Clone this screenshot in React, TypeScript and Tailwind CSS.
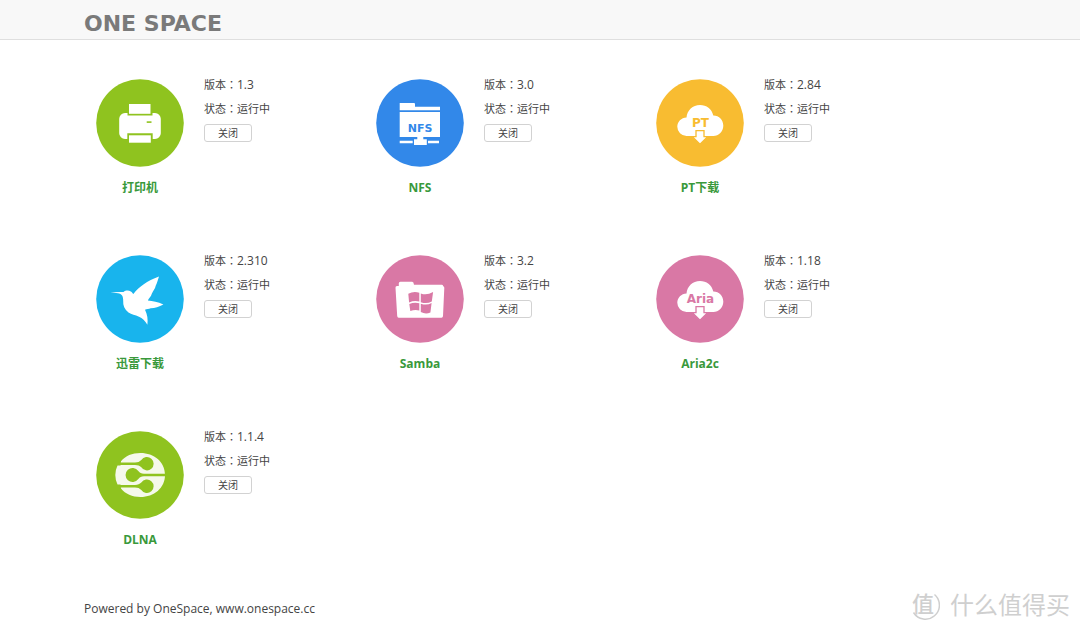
import type { ReactNode } from 'react'

type Service = {
  name: string
  version: string
  icon: ReactNode
}

const PrinterIcon = () => (
  <svg viewBox="0 0 88 88" className="size-[88px]" aria-hidden="true">
    <circle cx="44" cy="44" r="43.8" fill="#8fc31f" />
    <rect x="33" y="25" width="21.5" height="9.8" fill="#fff" />
    <path
      fill="#fff"
      d="M29 34h2.5v2.6h25V34H59a5.8 5.8 0 0 1 5.8 5.8v14.4A5.8 5.8 0 0 1 59 60h-2.3v-5.8H31.3V60H29a5.8 5.8 0 0 1-5.8-5.8V39.8A5.8 5.8 0 0 1 29 34z"
    />
    <rect x="33" y="56.3" width="21.8" height="7.4" fill="#fff" />
    <rect x="50.7" y="42.3" width="4.8" height="1.6" fill="#8fc31f" />
  </svg>
)

const NfsIcon = () => (
  <svg viewBox="0 0 88 88" className="size-[88px]" aria-hidden="true">
    <circle cx="44" cy="44" r="43.8" fill="#3288e9" />
    <path
      fill="#fff"
      d="M23.7 24H38q1 0 1 1v2.7h25v3.6H23.7zM23.7 33H64v25H47.3v2.3h3.5V66H38v-5.7h3.3V58H23.7zM23.7 61.7h13v2.6h-13zM52 61.7h11v2.6H52z"
    />
    <text x="44" y="53.4" textAnchor="middle" fontSize="11" fontWeight="700" fontFamily="DejaVu Sans, sans-serif" fill="#3288e9">
      NFS
    </text>
  </svg>
)

const CloudIcon = ({ color, text }: { color: string; text: string }) => (
  <svg viewBox="0 0 88 88" className="size-[88px]" aria-hidden="true">
    <circle cx="44" cy="44" r="43.8" fill={color} />
    <path
      fill="#fff"
      d="M30.5 57a9.2 9.2 0 0 1-9.2-9.2c0-5 4-9.1 9.2-9.3C31 31.4 36.7 26 44 26c6.4 0 11.8 4 13.3 10.5 6 0 10 4.6 10 10.3S62.8 57 57.3 57z"
    />
    <path
      fill="#fff"
      stroke={color}
      strokeWidth="1.3"
      d="M40 51.7h8v6h3.6L44 65.2l-7.6-7.5H40z"
    />
    <text x="44.5" y="47.5" textAnchor="middle" fontSize="12" fontWeight="700" fontFamily="DejaVu Sans, sans-serif" fill={color}>
      {text}
    </text>
  </svg>
)

const BirdIcon = () => (
  <svg viewBox="0 0 88 88" className="size-[88px]" aria-hidden="true">
    <circle cx="44" cy="44" r="43.8" fill="#18b4ed" />
    <path
      fill="#fff"
      d="M14.5 37.2q7-.4 13-.3c2-1.5 5-1.7 7.3-.5 1.3.7 1.7 1.8 2.6 2.6C43 32 51 26 63 21.6c-1.2 3.4-1.7 6-3.3 9.2-.6 3.2-2.6 5-4 8.3-.6 3-2.7 3.6-3.9 6.4 5 .5 10 1.5 15.6 3.9-4.4 2.5-8.4 3.3-12.7 3.9-2 .7-4 .6-5.7 1.5 2.5 5 3 9.5 2.4 15-2.4-3.8-5-6.6-8.4-8-3.8-2-7.5-2-10.500-4.300-4-3.300-5.600-7-5.300-11.500.2-4.800-1.400-7.300-5.200-7.800q-3.500-.7-7.500-1z"
    />
  </svg>
)

const SambaIcon = () => (
  <svg viewBox="0 0 88 88" className="size-[88px]" aria-hidden="true">
    <circle cx="44" cy="44" r="43.8" fill="#d978a5" />
    <path
      fill="#fff"
      d="M22.8 31v-2.7q0-1.6 1.6-1.6h11.8q1.5 0 1.8 3h28q1.2 0 1.2 1.6 1.2 0 1.1 1.6l-1.3 28.2q-.1 1.6-1.5 1.6H22.7q-1.4 0-1.5-1.6L19.5 32.8Q19.4 31 21 31z"
    />
    <g fill="#d978a5">
      <path d="M32.3 38.8q5.400-3 11-1v8.800q-5-1.400-10.200.9z" />
      <path d="M44.8 38.500q6 2.300 12.300-1.600l-1.300 9.600q-5 2.700-11 .7z" />
      <path d="M33.3 49q5-2.200 10-.8v7.200q-4.500-1.200-9 .6z" />
      <path d="M44.8 48.700q6 2 10.800-.7l-1.200 9.600q-5 2-9.600-.6z" />
    </g>
  </svg>
)

const DlnaIcon = () => (
  <svg viewBox="0 0 88 88" className="size-[88px]" aria-hidden="true">
    <circle cx="44" cy="44" r="43.8" fill="#8fc31f" />
    <path
      fill="#f5f9ea"
      d="M25 30.3C29.5 25 36 22.1 44.5 22.1 58 22.1 69 31 69 44s-11 22-24.5 22C36 66 29.5 63 25 57.5L24.5 53.5h-3Q19.3 49 19.3 44t2.2-9.5h3z"
    />
    <g fill="#8fc31f">
      <path d="M22 31.6h17c3 0 4.5-.8 6.3-2.5a6.7 6.7 0 1 1 0 7.2c-1.800-1.600-3.300-2.300-6.300-2.300H22z" />
      <path d="M70 42.7H48c-3 0-4-.9-5.7-2.7a7 7 0 1 0 0 8c1.700-1.800 2.700-2.700 5.700-2.700h22z" />
      <path d="M20 54h19c3 0 4.5-.7 6.3-2.4a6.7 6.7 0 1 1 0 7.3c-1.800-1.700-3.300-2.500-6.300-2.500H22z" />
    </g>
  </svg>
)

const services: Service[] = [
  { name: '打印机', version: '1.3', icon: <PrinterIcon /> },
  { name: 'NFS', version: '3.0', icon: <NfsIcon /> },
  { name: 'PT下载', version: '2.84', icon: <CloudIcon color="#f8bc31" text="PT" /> },
  { name: '迅雷下载', version: '2.310', icon: <BirdIcon /> },
  { name: 'Samba', version: '3.2', icon: <SambaIcon /> },
  { name: 'Aria2c', version: '1.18', icon: <CloudIcon color="#d978a5" text="Aria" /> },
  { name: 'DLNA', version: '1.1.4', icon: <DlnaIcon /> },
]

// the JP face centres the full-width colon
const Colon = () => <span className="font-['Noto_Sans_CJK_JP',sans-serif]">：</span>

const ServiceItem = ({ name, version, icon }: Service) => (
  <li className="flex gap-5 pl-3">
    <div className="flex w-[88px] flex-col items-center">
      {icon}
      <h2 className="mt-3 whitespace-nowrap text-xs leading-[18px] font-bold text-[#39993b]">{name}</h2>
    </div>
    <div className="-mt-[7px] flex flex-col items-start whitespace-nowrap text-[11px] leading-6">
      <p className="h-6">版本<Colon /><span className="text-xs leading-6">{version}</span></p>
      <p className="h-6">状态<Colon />运行中</p>
      <button
        type="button"
        className="mt-1 flex h-[18px] w-12 cursor-pointer items-center justify-center rounded-[3px] border border-[#d2d2d2] bg-white text-[10px] leading-4 hover:bg-gray-50"
      >
        关闭
      </button>
    </div>
  </li>
)

export default function App() {
  return (
    <div className="relative min-h-screen bg-white font-['Open_Sans','Noto_Sans_CJK_SC',sans-serif] text-[#444]">
      <header className="flex h-10 items-center border-b border-[#dfdfdf] bg-[#f8f8f8] pt-2 pl-[84px]">
        <h1 className="font-['DejaVu_Sans',sans-serif] text-[22px] leading-6 font-bold text-[#7a7a7a]">ONE SPACE</h1>
      </header>

      <main className="pt-[39px] pl-[84px]">
        <ul className="grid grid-cols-[repeat(auto-fill,280px)] gap-y-[58px]">
          {services.map((service) => (
            <ServiceItem key={service.name} {...service} />
          ))}
        </ul>
      </main>

      <footer className="mt-[52px] pb-4 pl-[84px] text-xs leading-4">
        Powered by OneSpace, www.onespace.cc
      </footer>

      <div className="absolute right-2.5 bottom-3 flex items-center gap-2.5 text-[#cfcfcf]">
        <svg viewBox="0 0 30 32" className="h-8 w-[30px]" aria-hidden="true">
          <path d="M24.5 5.5A14 14 0 1 1 3.5 23.5" fill="none" stroke="currentColor" strokeWidth="1.5" />
          <text x="13" y="23" textAnchor="middle" fontSize="22" fontWeight="500" fill="currentColor">
            值
          </text>
        </svg>
        <span className="text-2xl leading-8">什么值得买</span>
      </div>
    </div>
  )
}
